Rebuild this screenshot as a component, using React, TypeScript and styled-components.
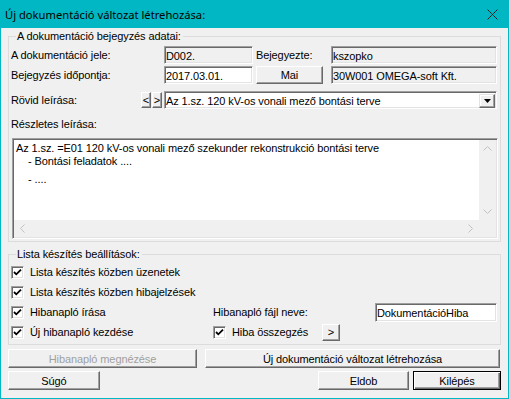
import styled, { createGlobalStyle } from "styled-components";

const GlobalStyle = createGlobalStyle`
  * { box-sizing: border-box; }
  html, body { margin: 0; padding: 0; background: #ffffff; }
  body {
    font-family: "Liberation Sans", Arial, sans-serif;
    font-size: 11px;
    letter-spacing: -0.1px;
    color: #000;
  }
`;

const TEAL = "#00b7c3";

export default function App() {
  return (
    <>
      <GlobalStyle />
      <Window>
        <TitleBar>
          <Title>Új dokumentáció változat létrehozása:</Title>
          <svg width="11" height="11" viewBox="0 0 11 11">
            <path d="M0.5 0.5 L10.5 10.5 M10.5 0.5 L0.5 10.5" stroke="#222" strokeWidth="1" />
          </svg>
        </TitleBar>

        <Body>
          <Group>
            <Legend>A dokumentáció bejegyzés adatai:</Legend>
            <EntryBody>
              <Row>
                <LabelCell $width={153}>A dokumentáció jele:</LabelCell>
                <Field $width={89} $disabled>D002.</Field>
                <MidCell>Bejegyezte:</MidCell>
                <Field $width={166} $disabled>kszopko</Field>
              </Row>
              <Row>
                <LabelCell $width={153}>Bejegyzés időpontja:</LabelCell>
                <Field $width={89}>2017.03.01.</Field>
                <MidCell>
                  <Button $width={67} $height={18}>Mai</Button>
                </MidCell>
                <Field $width={166} $disabled>30W001 OMEGA-soft Kft.</Field>
              </Row>
              <Row $gap={7}>
                <LabelCell $width={130}>Rövid leírása:</LabelCell>
                <StepButtons>
                  <StepButton>&lt;</StepButton>
                  <StepButton>&gt;</StepButton>
                </StepButtons>
                <Field $width={333}>
                  <ComboText>Az 1.sz. 120 kV-os vonali mező bontási terve</ComboText>
                  <DropButton>
                    <svg width="7" height="4" viewBox="0 0 7 4">
                      <path d="M0 0 H7 L3.5 4 Z" fill="#000" />
                    </svg>
                  </DropButton>
                </Field>
              </Row>
              <PlainLabel>Részletes leírása:</PlainLabel>
              <Memo>
                <MemoText>
                  <MemoLine>Az 1.sz. =E01 120 kV-os vonali mező szekunder rekonstrukció bontási terve</MemoLine>
                  <MemoLine $indent={12}>- Bontási feladatok ....</MemoLine>
                  <MemoLine $indent={12} $gap={5}>- ....</MemoLine>
                </MemoText>
                <VScroll>
                  <svg width="9" height="5" viewBox="0 0 9 5">
                    <path d="M0.5 4.5 L4.5 0.5 L8.5 4.5" stroke="#c2c2c2" fill="none" />
                  </svg>
                  <svg width="9" height="5" viewBox="0 0 9 5">
                    <path d="M0.5 0.5 L4.5 4.5 L8.5 0.5" stroke="#c2c2c2" fill="none" />
                  </svg>
                </VScroll>
                <HScroll>
                  <svg width="5" height="9" viewBox="0 0 5 9">
                    <path d="M4.5 0.5 L0.5 4.5 L4.5 8.5" stroke="#c2c2c2" fill="none" />
                  </svg>
                  <svg width="5" height="9" viewBox="0 0 5 9">
                    <path d="M0.5 0.5 L4.5 4.5 L0.5 8.5" stroke="#c2c2c2" fill="none" />
                  </svg>
                </HScroll>
                <Corner />
              </Memo>
            </EntryBody>
          </Group>

          <Group $top={6}>
            <Legend>Lista készítés beállítások:</Legend>
            <OptionsGrid>
              <Wide>
                <Check label="Lista készítés közben üzenetek" />
              </Wide>
              <Wide>
                <Check label="Lista készítés közben hibajelzések" />
              </Wide>
              <Check label="Hibanapló írása" />
              <Cell>
                <LabelCell $width={162}>Hibanapló fájl neve:</LabelCell>
                <Field $width={122} $height={19}>DokumentációHiba</Field>
              </Cell>
              <Check label="Új hibanapló kezdése" />
              <Cell>
                <Check label="Hiba összegzés" width={109} />
                <Button $width={18} $height={17}>&gt;</Button>
              </Cell>
            </OptionsGrid>
          </Group>

          <ButtonRow $top={4}>
            <Button $width={189} $disabled>Hibanapló megnézése</Button>
            <Button $width={295} $left={8}>Új dokumentáció változat létrehozása</Button>
          </ButtonRow>
          <ButtonRow $top={3}>
            <Button $width={92}>Súgó</Button>
            <Spacer />
            <Button $width={91}>Eldob</Button>
            <Button $width={88} $left={4} $default>Kilépés</Button>
          </ButtonRow>
        </Body>
      </Window>
    </>
  );
}

function Check({ label, width }: { label: string; width?: number }) {
  return (
    <CheckWrap $width={width}>
      <CheckBox>
        <svg width="9" height="9" viewBox="0 0 9 9">
          <path d="M1 4 L3.3 6.3 L8 1.6" stroke="#000" strokeWidth="1.8" fill="none" />
        </svg>
      </CheckBox>
      {label}
    </CheckWrap>
  );
}

const Window = styled.div`
  width: 509px;
  height: 399px;
  border: 1px solid ${TEAL};
  border-top: none;
  background: #f0f0f0;
  display: flex;
  flex-direction: column;
`;

const TitleBar = styled.div`
  height: 28px;
  flex: none;
  background: ${TEAL};
  display: flex;
  align-items: center;
  justify-content: space-between;
  padding: 1px 10px 0 4px;
`;

const Title = styled.span`
  font-family: "Noto Sans", "Open Sans", sans-serif;
  font-size: 11.2px;
  letter-spacing: 0;
  color: #000;
`;

const Body = styled.div`
  flex: 1;
  display: flex;
  flex-direction: column;
  padding: 2px 7px 0;
`;

const Group = styled.fieldset<{ $top?: number }>`
  margin: ${(p) => p.$top ?? 0}px 0 0;
  padding: 0;
  min-width: 0;
  border: 1px solid #dcdcdc;
`;

const Legend = styled.legend`
  margin-left: 7px;
  padding: 0 2px 0 1px;
  line-height: 13px;
`;

const EntryBody = styled.div`
  display: flex;
  flex-direction: column;
  padding: 3px 3px 2px 2px;
`;

const Row = styled.div<{ $gap?: number }>`
  display: flex;
  align-items: center;
  height: 18px;
  margin-top: ${(p) => p.$gap ?? 2}px;
  &:first-child {
    margin-top: 0;
  }
`;

const LabelCell = styled.div<{ $width: number }>`
  width: ${(p) => p.$width}px;
  flex: none;
  white-space: nowrap;
`;

const MidCell = styled.div`
  width: 78px;
  flex: none;
  display: flex;
  align-items: center;
  padding-left: 3px;
  white-space: nowrap;
`;

const Field = styled.div<{ $width: number; $height?: number; $disabled?: boolean }>`
  width: ${(p) => p.$width}px;
  height: ${(p) => p.$height ?? 18}px;
  flex: none;
  display: flex;
  align-items: center;
  padding: 1px 0 0 1px;
  white-space: nowrap;
  background: ${(p) => (p.$disabled ? "#f0f0f0" : "#ffffff")};
  border: 1px solid;
  border-color: #a0a0a0 #ffffff #ffffff #a0a0a0;
  box-shadow: inset 1px 1px #696969, inset -1px -1px #e3e3e3;
`;

const ComboText = styled.span`
  flex: 1;
`;

const DropButton = styled.div`
  width: 16px;
  height: 14px;
  margin-right: 1px;
  display: flex;
  align-items: center;
  justify-content: center;
  background: #f0f0f0;
  border: 1px solid;
  border-color: #e3e3e3 #696969 #696969 #e3e3e3;
  box-shadow: inset -1px -1px #a0a0a0, inset 1px 1px #ffffff;
`;

const StepButtons = styled.div`
  display: flex;
  gap: 1px;
  margin-right: 2px;
`;

const StepButton = styled.div`
  width: 10px;
  height: 16px;
  display: flex;
  align-items: center;
  justify-content: center;
  background: #f0f0f0;
  border: 1px solid;
  border-color: #ffffff #696969 #696969 #ffffff;
  box-shadow: inset -1px -1px #a0a0a0;
`;

const PlainLabel = styled.div`
  margin-top: 9px;
  line-height: 13px;
`;

const Memo = styled.div`
  margin: 7px 0 0 1px;
  width: 486px;
  height: 101px;
  display: grid;
  grid-template-columns: 1fr 17px;
  grid-template-rows: 1fr 17px;
  padding: 1px;
  border: 1px solid;
  border-color: #a0a0a0 #ffffff #ffffff #a0a0a0;
  box-shadow: inset 1px 1px #696969, inset -1px -1px #e3e3e3;
`;

const MemoText = styled.div`
  background: #ffffff;
  padding: 2px 0 0 2px;
  line-height: 13px;
  overflow: hidden;
`;

const MemoLine = styled.div<{ $indent?: number; $gap?: number }>`
  padding-left: ${(p) => p.$indent ?? 0}px;
  margin-top: ${(p) => p.$gap ?? 0}px;
  white-space: nowrap;
`;

const VScroll = styled.div`
  background: #f0f0f0;
  display: flex;
  flex-direction: column;
  justify-content: space-between;
  align-items: center;
  padding: 6px 0;
`;

const HScroll = styled.div`
  background: #f0f0f0;
  display: flex;
  justify-content: space-between;
  align-items: center;
  padding: 0 6px;
`;

const Corner = styled.div`
  background: #f0f0f0;
`;

const OptionsGrid = styled.div`
  display: grid;
  grid-template-columns: 202px 1fr;
  grid-auto-rows: 20px;
  align-items: center;
  padding: 1px 3px 2px 2px;
`;

const Wide = styled.div`
  grid-column: 1 / span 2;
`;

const Cell = styled.div`
  display: flex;
  align-items: center;
`;

const CheckWrap = styled.div<{ $width?: number }>`
  display: flex;
  align-items: center;
  white-space: nowrap;
  ${(p) => (p.$width ? `width: ${p.$width}px; flex: none;` : "")}
`;

const CheckBox = styled.span`
  width: 13px;
  height: 13px;
  flex: none;
  margin-right: 6px;
  display: flex;
  align-items: center;
  justify-content: center;
  background: #ffffff;
  border: 1px solid;
  border-color: #a0a0a0 #ffffff #ffffff #a0a0a0;
  box-shadow: inset 1px 1px #696969, inset -1px -1px #e3e3e3;
`;

const ButtonRow = styled.div<{ $top: number }>`
  display: flex;
  margin-top: ${(p) => p.$top}px;
`;

const Spacer = styled.div`
  flex: 1;
`;

const Button = styled.div<{
  $width: number;
  $height?: number;
  $left?: number;
  $disabled?: boolean;
  $default?: boolean;
}>`
  width: ${(p) => p.$width}px;
  height: ${(p) => p.$height ?? 19}px;
  margin-left: ${(p) => p.$left ?? 0}px;
  flex: none;
  display: flex;
  align-items: center;
  justify-content: center;
  white-space: nowrap;
  color: ${(p) => (p.$disabled ? "#a0a0a0" : "#000000")};
  background: #f0f0f0;
  border: 1px solid;
  border-color: ${(p) => (p.$default ? "#000000" : "#ffffff #696969 #696969 #ffffff")};
  box-shadow: ${(p) =>
    p.$default
      ? "inset 1px 1px #ffffff, inset -1px -1px #696969, inset -2px -2px #a0a0a0"
      : "inset -1px -1px #a0a0a0"};
`;
